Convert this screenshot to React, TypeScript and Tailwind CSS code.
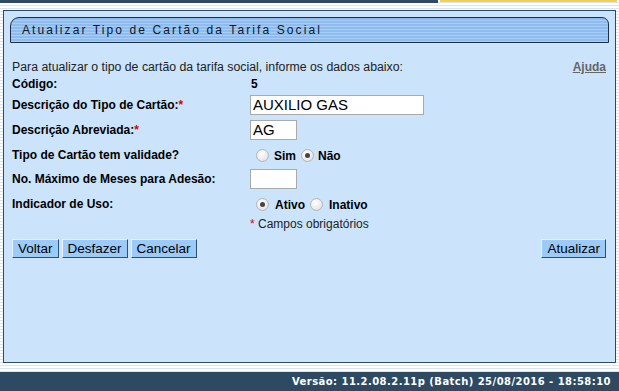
import React from "react";

function Radio({ checked }: { checked?: boolean }) {
  return (
    <span className="inline-flex w-[13px] h-[13px] rounded-full border border-[#b5b5b5] bg-[radial-gradient(circle_at_40%_35%,#ffffff,#dcdcdc)] items-center justify-center">
      {checked && <span className="w-[5px] h-[5px] rounded-full bg-[#444]" />}
    </span>
  );
}

function Btn({ children }: { children: React.ReactNode }) {
  return (
    <button className="h-[19px] px-[5px] bg-[#9ccbf9] border border-t-[#e6f2ff] border-l-[#e6f2ff] border-r-[#2a4f78] border-b-[#2a4f78] text-[13.5px] leading-none text-black">
      {children}
    </button>
  );
}

export default function App() {
  const stripes =
    "bg-[repeating-linear-gradient(to_bottom,#ffffff_0px,#ffffff_2px,#d9e5f2_2px,#d9e5f2_3px)]";
  return (
    <div
      className={`w-[619px] h-[391px] flex flex-col overflow-hidden ${stripes}`}
      style={{ fontFamily: '"Liberation Sans", Arial, sans-serif' }}
    >
      <div className="flex h-[3px] shrink-0">
        <div className="w-[438px] bg-[#2e4a62]" />
        <div className="w-[177px] h-[2px] ml-[2px] bg-[#f2d050]" />
      </div>
      <div className="pt-[7px] pl-[3px] pr-[3px] h-[361px] shrink-0">
        <div className="h-[353px] border border-[#2e4a62] bg-[#cbe4fc] pt-[6px] px-[6px]">
          <div className="h-[26px] border border-[#1b2f45] rounded-tl-[9px] rounded-tr-[7px] bg-[repeating-linear-gradient(to_bottom,#8ebcef_0px,#8ebcef_2px,#a9cdf4_2px,#a9cdf4_3px)] flex items-center pl-[11px]">
            <span className="text-[12px] tracking-[2.1px] text-[#0b1a2a]">
              Atualizar Tipo de Cartão da Tarifa Social
            </span>
          </div>
          <div className="pl-[2px] pr-[3px] text-[12px] text-black">
            <div className="flex justify-between items-center h-[14px] mt-[17px]">
              <span className="text-[#222] text-[12.3px]">
                Para atualizar o tipo de cartão da tarifa social, informe os dados abaixo:
              </span>
              <span className="font-bold underline text-[#666]">Ajuda</span>
            </div>
            <div className="flex items-center h-[14px] mt-[3px] font-bold">
              <span className="w-[238px]">Código:</span>
              <span className="pl-[1px]">5</span>
            </div>
            <div className="flex items-center h-[20px] mt-[4px]">
              <span className="w-[238px] font-bold">
                Descrição do Tipo de Cartão:<span className="text-[#d00]">*</span>
              </span>
              <div className="w-[174px] h-[20px] bg-white border border-[#aaa] text-[15px] leading-[18px] pl-[2px]">
                AUXILIO GAS
              </div>
            </div>
            <div className="flex items-center h-[20px] mt-[5px]">
              <span className="w-[238px] font-bold">
                Descrição Abreviada:<span className="text-[#d00]">*</span>
              </span>
              <div className="w-[47px] h-[20px] bg-white border border-[#aaa] text-[15px] leading-[18px] pl-[2px]">
                AG
              </div>
            </div>
            <div className="flex items-center h-[20px] mt-[5px]">
              <span className="w-[238px] font-bold">Tipo de Cartão tem validade?</span>
              <span className="flex items-center ml-[6px] gap-[5px] font-bold">
                <Radio />
                <span className="mt-[2px]">Sim</span>
              </span>
              <span className="flex items-center ml-[5px] gap-[4px] font-bold">
                <Radio checked />
                <span className="mt-[2px]">Não</span>
              </span>
            </div>
            <div className="flex items-center h-[20px] mt-[4px]">
              <span className="w-[238px] font-bold">No. Máximo de Meses para Adesão:</span>
              <div className="w-[47px] h-[20px] bg-white border border-[#aaa]" />
            </div>
            <div className="flex items-center h-[20px] mt-[5px]">
              <span className="w-[238px] font-bold">Indicador de Uso:</span>
              <span className="flex items-center ml-[6px] gap-[6px] font-bold">
                <Radio checked />
                <span className="mt-[2px]">Ativo</span>
              </span>
              <span className="flex items-center ml-[5px] gap-[6px] font-bold">
                <Radio />
                <span className="mt-[2px]">Inativo</span>
              </span>
            </div>
            <div className="flex items-center h-[14px] mt-[3px]">
              <span className="w-[238px]" />
              <span className="text-[#222]">
                <span className="text-[#d00]">*</span> Campos obrigatórios
              </span>
            </div>
            <div className="flex justify-between mt-[8px]">
              <div className="flex gap-[3px]">
                <Btn>Voltar</Btn>
                <Btn>Desfazer</Btn>
                <Btn>Cancelar</Btn>
              </div>
              <Btn>Atualizar</Btn>
            </div>
          </div>
        </div>
      </div>
      <div className="mt-[8px] flex-1 bg-[#2e4a62] flex items-center justify-end pr-[8px]">
        <span
          className="text-white font-bold text-[10px] tracking-[0.45px]"
          style={{ fontFamily: '"DejaVu Sans", Verdana, sans-serif' }}
        >
          Versão: 11.2.08.2.11p (Batch) 25/08/2016 - 18:58:10
        </span>
      </div>
    </div>
  );
}
